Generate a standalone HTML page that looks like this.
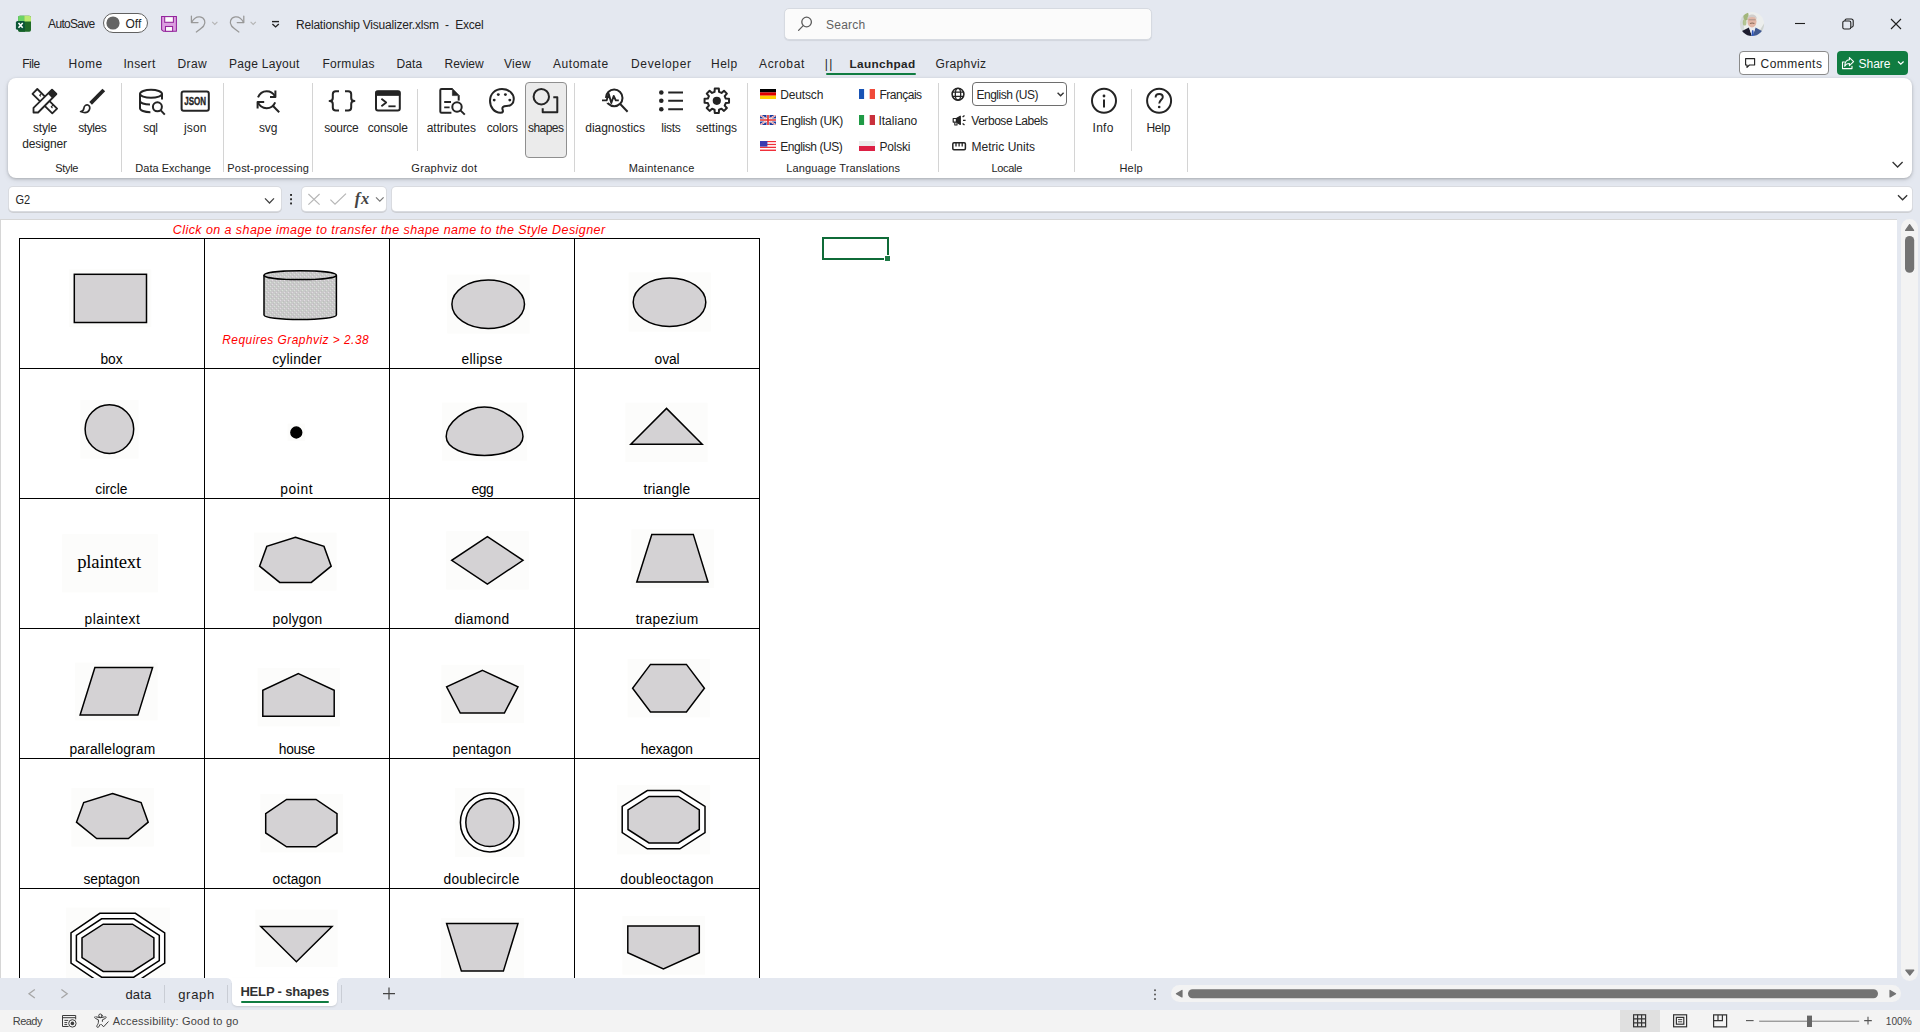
<!DOCTYPE html>
<html><head><meta charset="utf-8"><title>Relationship Visualizer.xlsm - Excel</title><style>
html,body{margin:0;padding:0}
body{width:1920px;height:1032px;overflow:hidden;background:#e4e8f0;position:relative;font-family:"Liberation Sans",sans-serif}
.t{position:absolute;white-space:pre;line-height:1;font-family:"Liberation Sans",sans-serif}
.a{position:absolute;box-sizing:border-box}
.vs{position:absolute;width:1px;background:#d4d4d4}
.gl{position:absolute;background:#000}
svg{position:absolute;left:0;top:0;overflow:visible}
text{white-space:pre}
</style></head>
<body>
<div class="a" style="left:784px;top:8px;width:368px;height:32px;background:#fbfbfb;border:1px solid #d6dae1;border-radius:5px;box-shadow:0 1px 1px rgba(0,0,0,.08)"></div>
<div class="a" style="left:825.5px;top:73px;width:90px;height:2px;background:#107c41;border-radius:1px"></div>
<div class="a" style="left:1739px;top:51px;width:90px;height:24px;background:#fff;border:1px solid #8a8a8a;border-radius:4px"></div>
<div class="a" style="left:1837px;top:51px;width:71px;height:24px;background:#107c41;border-radius:4px"></div>
<div class="a" style="left:8px;top:78px;width:1904px;height:100px;background:#fff;border-radius:8px;box-shadow:0 1px 3px rgba(0,0,0,.22),0 2px 6px rgba(0,0,0,.08)"></div>
<div class="vs" style="left:121px;top:83px;height:89px"></div>
<div class="vs" style="left:223px;top:83px;height:89px"></div>
<div class="vs" style="left:312px;top:83px;height:89px"></div>
<div class="vs" style="left:574px;top:83px;height:89px"></div>
<div class="vs" style="left:747px;top:83px;height:89px"></div>
<div class="vs" style="left:938px;top:83px;height:89px"></div>
<div class="vs" style="left:1074px;top:83px;height:89px"></div>
<div class="vs" style="left:1187px;top:83px;height:89px"></div>
<div class="vs" style="left:417px;top:89px;height:62px"></div>
<div class="vs" style="left:1131px;top:89px;height:62px"></div>
<div class="a" style="left:525px;top:82px;width:42px;height:76px;background:#ebebeb;border:1px solid #8f8f8f;border-radius:4px"></div>
<div class="a" style="left:972px;top:82px;width:95px;height:24px;background:#fff;border:1px solid #6e6e6e;border-radius:4px"></div>
<div class="a" style="left:8.5px;top:187px;width:272px;height:24px;background:#fff;border-radius:4px;box-shadow:0 0 0 1px #d9dbe0,0 1px 0 1px #cdcfd3"></div>
<div class="a" style="left:302px;top:187px;width:84px;height:24px;background:#fff;border-radius:4px;box-shadow:0 0 0 1px #d9dbe0,0 1px 0 1px #cdcfd3"></div>
<div class="a" style="left:392px;top:187px;width:1520px;height:24px;background:#fff;border-radius:4px;box-shadow:0 0 0 1px #d9dbe0,0 1px 0 1px #cdcfd3"></div>
<div class="a" style="left:0px;top:219px;width:1897px;height:759px;background:#fff;border-left:1px solid #d6d6d6;border-top:1px solid #d6d6d6"></div>
<div class="gl" style="left:19px;top:238px;width:1px;height:740px"></div>
<div class="gl" style="left:204px;top:238px;width:1px;height:740px"></div>
<div class="gl" style="left:389px;top:238px;width:1px;height:740px"></div>
<div class="gl" style="left:574px;top:238px;width:1px;height:740px"></div>
<div class="gl" style="left:759px;top:238px;width:1px;height:740px"></div>
<div class="gl" style="left:19px;top:238px;width:741px;height:1px"></div>
<div class="gl" style="left:19px;top:368px;width:741px;height:1px"></div>
<div class="gl" style="left:19px;top:498px;width:741px;height:1px"></div>
<div class="gl" style="left:19px;top:628px;width:741px;height:1px"></div>
<div class="gl" style="left:19px;top:758px;width:741px;height:1px"></div>
<div class="gl" style="left:19px;top:888px;width:741px;height:1px"></div>
<div class="a" style="left:822px;top:237px;width:67px;height:23px;border:2px solid #0f6b38"></div>
<div class="a" style="left:884px;top:255px;width:7px;height:7px;background:#1f7a47;border:1px solid #fff"></div>
<div class="a" style="left:0;top:1010px;width:1920px;height:22px;background:#f3f3f3"></div>
<div class="a" style="left:232px;top:978px;width:105px;height:28px;background:#fff;border-radius:0 0 5px 5px;box-shadow:0 1px 2px rgba(0,0,0,.12)"></div>
<div class="a" style="left:240.6px;top:1001px;width:88.7px;height:2px;background:#107c41;border-radius:1px"></div>
<div class="a" style="left:227px;top:978px;width:5px;height:5px;background:radial-gradient(circle at 0% 100%,#e4e8f0 4.4px,#fff 5.2px)"></div>
<div class="a" style="left:337px;top:978px;width:5px;height:5px;background:radial-gradient(circle at 100% 100%,#e4e8f0 4.4px,#fff 5.2px)"></div>
<div class="vs" style="left:164px;top:985px;height:18px;background:#c9cdd5"></div>
<div class="vs" style="left:227px;top:985px;height:18px;background:#c9cdd5"></div>
<div class="vs" style="left:341px;top:985px;height:18px;background:#c9cdd5"></div>
<svg width="1920" height="1032" viewBox="0 0 1920 1032">
<defs><pattern id="dith" width="4" height="4" patternUnits="userSpaceOnUse"><rect width="4" height="4" fill="#c9c9c9"/><rect x="0" y="0" width="1" height="1" fill="#e3d9e3"/><rect x="2" y="2" width="1" height="1" fill="#d9e3d9"/><rect x="3" y="1" width="1" height="1" fill="#bdbdbd"/><rect x="1" y="3" width="1" height="1" fill="#bfbfbf"/></pattern></defs>
<clipPath id="sheetclip"><rect x="2" y="220" width="1895" height="758"/></clipPath>
<g clip-path="url(#sheetclip)">
<g stroke="#000" stroke-width="1.5" stroke-linejoin="miter" fill="#d4d2d4">
<rect x="69.0" y="269.4" width="82.3" height="57.8" fill="#fcfcfb" stroke="none"/>
<rect x="74.3" y="274.3" width="72.2" height="48.2"/>
<path d="M264 275.2 V315 C264 317.6 280.2 319.6 300.2 319.6 C320.2 319.6 336.4 317.6 336.4 315 V275.2 C336.4 272.6 320.2 270.8 300.2 270.8 C280.2 270.8 264 272.6 264 275.2Z" fill="url(#dith)"/><path d="M264 275.2 C264 277.8 280.2 279.6 300.2 279.6 C320.2 279.6 336.4 277.8 336.4 275.2" fill="none"/>
<rect x="447.2" y="274.6" width="82.5" height="59.0" fill="#fcfcfb" stroke="none"/>
<ellipse cx="488.2" cy="304.2" rx="36.3" ry="24.3"/>
<rect x="628.6" y="272.4" width="82.2" height="59.2" fill="#fcfcfb" stroke="none"/>
<ellipse cx="669.5" cy="302.3" rx="36.3" ry="24.3"/>
<rect x="80.3" y="400.0" width="58.2" height="58.6" fill="#fcfcfb" stroke="none"/>
<circle cx="109.4" cy="429.1" r="24.3"/>
<rect x="287.6" y="423.6" width="17.4" height="17.4" fill="#fcfcfb" stroke="none"/>
<circle cx="296.3" cy="432.5" r="5.4" fill="#000"/>
<rect x="442.0" y="402.6" width="85.2" height="58.0" fill="#fcfcfb" stroke="none"/>
<path d="M484.4 407 C503 407 523 423 523 436.6 C523 448.6 503.6 455.4 484.4 455.4 C465.2 455.4 446.2 448.6 446.2 436.6 C446.2 423 465.8 407 484.4 407Z"/>
<rect x="625.3" y="402.7" width="82.4" height="59.3" fill="#fcfcfb" stroke="none"/>
<polygon points="666.5,408.4 702.2,444.3 630.8,444.3" fill="#d4d2d4"/>
<rect x="62.2" y="534.2" width="95.6" height="58.2" fill="#fcfcfb" stroke="none"/>
<rect x="254.0" y="532.6" width="82.6" height="58.0" fill="#fcfcfb" stroke="none"/>
<polygon points="295.4,537.3 324.0,546.4 331.2,566.2 311.3,582.4 279.7,582.4 259.6,566.2 266.8,546.4" fill="#d4d2d4"/>
<rect x="446.2" y="531.2" width="82.6" height="58.4" fill="#fcfcfb" stroke="none"/>
<polygon points="487.4,536.6 523.0,560.3 487.4,584.0 451.7,560.3" fill="#d4d2d4"/>
<rect x="631.4" y="529.4" width="82.6" height="58.4" fill="#fcfcfb" stroke="none"/>
<polygon points="651.8,534.4 693.3,534.4 708.0,582.0 636.8,582.0" fill="#d4d2d4"/>
<rect x="75.2" y="662.6" width="82.4" height="57.8" fill="#fcfcfb" stroke="none"/>
<polygon points="94.9,667.5 152.6,667.5 137.9,715.1 80.1,715.1" fill="#d4d2d4"/>
<rect x="257.6" y="668.0" width="82.4" height="58.4" fill="#fcfcfb" stroke="none"/>
<polygon points="298.4,673.6 334.2,690.2 334.2,716.2 262.8,716.2 262.8,690.2" fill="#d4d2d4"/>
<rect x="441.4" y="664.8" width="82.6" height="58.4" fill="#fcfcfb" stroke="none"/>
<polygon points="482.5,670.4 518.0,686.8 504.4,713.0 460.3,713.0 446.6,686.8" fill="#d4d2d4"/>
<rect x="627.6" y="659.0" width="82.4" height="58.4" fill="#fcfcfb" stroke="none"/>
<polygon points="650.5,664.4 686.4,664.4 704.4,688.3 686.4,712.0 650.5,712.0 632.6,688.3" fill="#d4d2d4"/>
<rect x="71.4" y="788.0" width="82.4" height="58.6" fill="#fcfcfb" stroke="none"/>
<polygon points="112.5,793.5 141.1,802.5 148.2,822.2 128.4,838.5 96.7,838.5 76.5,822.2 83.7,802.5" fill="#d4d2d4"/>
<rect x="260.4" y="794.0" width="82.6" height="58.4" fill="#fcfcfb" stroke="none"/>
<polygon points="286.6,799.4 316.0,799.4 337.0,813.6 337.0,833.0 316.0,846.8 286.6,846.8 265.7,833.0 265.7,813.6" fill="#d4d2d4"/>
<rect x="455.2" y="788.0" width="69.2" height="69.0" fill="#fcfcfb" stroke="none"/>
<circle cx="489.8" cy="822.5" r="29.4" fill="#fff"/><circle cx="489.8" cy="822.5" r="24" />
<rect x="617.0" y="785.2" width="93.2" height="69.2" fill="#fcfcfb" stroke="none"/>
<polygon points="647.3,790.6 679.9,790.6 705.0,806.4 705.0,832.6 679.9,848.8 647.3,848.8 622.2,832.6 622.2,806.4" fill="#fff"/>
<polygon points="649.0,796.4 678.3,796.4 699.3,809.8 699.3,829.5 678.3,843.0 649.0,843.0 628.0,829.5 628.0,809.8" fill="#d4d2d4"/>
<rect x="66.0" y="907.6" width="104.0" height="82.4" fill="#fcfcfb" stroke="none"/>
<polygon points="99.8,913.3 135.4,913.3 164.7,932.8 164.7,963.0 135.4,982.6 99.8,982.6 71.0,963.0 71.0,932.8" fill="#fff"/>
<polygon points="101.6,918.8 133.7,918.8 159.3,935.4 159.3,960.6 133.7,977.2 101.6,977.2 76.4,960.6 76.4,935.4" fill="#fff"/>
<polygon points="103.2,924.2 132.5,924.2 153.9,937.9 153.9,957.6 132.5,971.4 103.2,971.4 82.0,957.6 82.0,937.9" fill="#d4d2d4"/>
<rect x="255.3" y="909.6" width="82.4" height="57.4" fill="#fcfcfb" stroke="none"/>
<polygon points="260.8,926.6 332.0,926.6 296.4,961.8" fill="#d4d2d4"/>
<rect x="441.2" y="918.0" width="82.8" height="62.0" fill="#fcfcfb" stroke="none"/>
<polygon points="446.6,923.4 518.0,923.4 503.4,971.1 461.4,971.1" fill="#d4d2d4"/>
<rect x="622.4" y="916.0" width="82.6" height="58.6" fill="#fcfcfb" stroke="none"/>
<polygon points="627.8,925.9 699.3,925.9 699.3,952.8 663.4,969.0 627.8,952.8" fill="#d4d2d4"/>
</g>
</g>
<g>
<rect x="18.1" y="15.8" width="12.9" height="16" rx="1.7" fill="#1f6b27"/>
<path d="M18.1 17.5 a1.7 1.7 0 0 1 1.7-1.7 H24.2 V21.4 H18.1Z" fill="#6bd366"/>
<path d="M24.2 15.8 H29.3 a1.7 1.7 0 0 1 1.7 1.7 V21.4 H24.2Z" fill="#bcea72"/>
<path d="M18.1 27 H25 V31.8 H19.8 a1.7 1.7 0 0 1 -1.7-1.7Z" fill="#14602a"/>
<rect x="15.9" y="20.9" width="9" height="8.9" rx="1.6" fill="#0b5637"/>
<path d="M18.5 23.1 L22.7 27.8 M22.7 23.1 L18.5 27.8" stroke="#fff" stroke-width="1.55" fill="none"/>
</g>
<rect x="103.5" y="13.5" width="44" height="19" rx="9.5" fill="#fff" stroke="#616161" stroke-width="1"/><circle cx="113" cy="23" r="6.6" fill="#646464"/>
<g stroke="#93239b" stroke-width="1.05"><path d="M161.6 16.5 H176.4 V31.3 H163.4 L161.6 29.7Z" fill="#dc9fe0"/>
<rect x="164.7" y="16.6" width="8.7" height="5.7" fill="#fdfdfd"/>
<rect x="165.5" y="26.5" width="7.1" height="4.8" fill="#fdfdfd"/></g>
<g fill="none" stroke="#989898" stroke-width="1.25" stroke-linecap="round" stroke-linejoin="round"><path d="M191.4 16 V22.5 H198" /><path d="M191.7 22.2 C193.7 18.6 197 16.4 200 16.9 C204.7 17.7 206.3 22.6 203.6 26 C202.4 27.6 199 30 196.3 32"/></g>
<g fill="none" stroke="#989898" stroke-width="1.25" stroke-linecap="round" stroke-linejoin="round" transform="translate(435.2,0) scale(-1,1)"><path d="M191.4 16 V22.5 H198" /><path d="M191.7 22.2 C193.7 18.6 197 16.4 200 16.9 C204.7 17.7 206.3 22.6 203.6 26 C202.4 27.6 199 30 196.3 32"/></g>
<g fill="none" stroke="#b4b4b4" stroke-width="1.1"><polyline points="212.2,21.8 214.8,24.4 217.4,21.8"/><polyline points="250.6,21.8 253.2,24.4 255.8,21.8"/></g>
<g fill="none" stroke="#222" stroke-width="1.4"><path d="M272 21.6 H279"/><polyline points="272.4,24 275.6,26.9 278.8,24"/></g>
<g fill="none" stroke="#5c5c5c" stroke-width="1.3" stroke-linecap="round"><circle cx="806.6" cy="22" r="4.8"/><path d="M803.2 25.6 L798.6 30.4"/></g>
<g><clipPath id="av"><circle cx="1752" cy="24" r="12.1"/></clipPath><filter id="avb" x="-20%" y="-20%" width="140%" height="140%"><feGaussianBlur stdDeviation="0.7"/></filter>
<g clip-path="url(#av)"><g filter="url(#avb)">
<rect x="1736" y="8" width="32" height="32" fill="#eceeed"/>
<rect x="1739" y="10" width="5" height="22" fill="#d5dadb"/>
<ellipse cx="1746" cy="16" rx="2.6" ry="4.4" fill="#8aa354" opacity="0.75"/>
<ellipse cx="1744.6" cy="22.4" rx="1.8" ry="3.2" fill="#9db36c" opacity="0.7"/>
<path d="M1760 30 L1765 22 V34Z" fill="#cfd3cf"/>
<path d="M1741 31.5 L1749 27.6 L1752.4 37 H1738Z" fill="#1b1d2e"/>
<path d="M1763 31.5 L1755.4 27.6 L1752.4 37 H1766Z" fill="#41598f"/>
<path d="M1749 27.4 L1752.2 37 L1755.6 27.4Z" fill="#ebebef"/>
<path d="M1752 30.2 L1751.4 37 H1754.2 L1753.4 30.2Z" fill="#2f56b8"/>
<ellipse cx="1752" cy="21.6" rx="4.5" ry="6" fill="#e2b7a6"/>
<path d="M1747.4 19.4 C1746.8 13 1757.4 13 1756.8 19.4 C1755.4 16.2 1748.8 16.2 1747.4 19.4Z" fill="#d0cdcb"/>
<path d="M1748.6 19.8 H1755.6" stroke="#a58f88" stroke-width="0.9"/>
<path d="M1750 23.5 Q1752.2 22.6 1754.4 23.5" stroke="#8b6b5a" stroke-width="1.1" fill="none"/>
</g></g></g>
<g fill="none" stroke="#1f1f1f" stroke-width="1.1"><path d="M1795 23.5 H1805"/><rect x="1842.8" y="21" width="8" height="8" rx="1.6"/><path d="M1845 21 V20.6 a1.6 1.6 0 0 1 1.6 -1.6 H1851.4 a1.8 1.8 0 0 1 1.8 1.8 V25.6 a1.6 1.6 0 0 1 -1.6 1.6 H1850.8"/><path d="M1891 19 L1901 29 M1901 19 L1891 29"/></g>
<path d="M1745.6 58.6 H1754.6 V65 H1749.4 L1747 67.4 V65 H1745.6Z" fill="none" stroke="#242424" stroke-width="1.15" stroke-linejoin="round"/>
<g fill="none" stroke="#fff" stroke-width="1.1" stroke-linejoin="round" stroke-linecap="round"><path d="M1844.4 62 H1842.5 V68.6 H1852 V66.2"/><path d="M1849.4 57.6 L1853.6 61.6 L1849.4 65.6 V63.5 C1847 63.5 1845.6 64.5 1844.7 66.2 C1844.8 62.6 1846.6 60 1849.4 59.8Z"/></g>
<polyline points="1898,61.6 1900.8,64.2 1903.6,61.6" fill="none" stroke="#fff" stroke-width="1.3"/>
<g fill="none" stroke="#242424" stroke-width="2" stroke-linejoin="round" stroke-linecap="butt">
<g stroke-width="1.8">
<polygon points="37.3,89 57.1,108.6 52.3,113.4 32.5,93.8" fill="#fff"/>
<path d="M41.6 93.3 l-1.9 1.9 l1.2 1.2 M53.2 104.9 l-1.9 1.9 l1.2 1.2" stroke-width="1.1" stroke-linejoin="miter"/>
<polygon points="33.5,107.9 33.5,112.5 38.1,112.5 56.4,94 52,89.6" fill="#fff"/>
<polygon points="52.4,90.2 55.8,93.6 52.3,97.2 48.9,93.8" fill="#242424" stroke-width="1.6" />
</g>
<path d="M103.8 90 L90.6 103.4" stroke-width="3.8"/>
<path d="M80.6 111.5 C82.8 111.4 83.7 109.9 83.9 108.1 C84.2 105.5 86.4 104.5 87.9 105 C89.9 105.7 90.2 108 89.3 109.8 C88 112.4 84.6 113.2 80.6 111.5Z" stroke-width="1.7"/>
<ellipse cx="151" cy="93.8" rx="11" ry="4"/><path d="M140 93.8 V108.2 C140 110.4 144.4 112.2 150.4 112.2"/><path d="M162 93.8 V99.4"/><path d="M140 100.8 C140 103 144.4 104.6 150 104.6"/>
<circle cx="157.4" cy="106.8" r="4.5"/><path d="M160.8 110.4 L164.8 114.6"/>
<rect x="181.6" y="91.4" width="27.2" height="19.4" rx="2"/>
<path d="M258 97.4 C259.6 93.4 262.8 91.2 266.6 91.2 C270.2 91.2 273.4 93.2 275 96.4"/><path d="M275.4 90.4 V97 H270"/>
<path d="M257.8 102.2 C259.4 106 262.8 108.2 266.6 108.2 C270.4 108.2 273.6 106 275.2 102.4"/><path d="M264.2 102 H257.6 V108.6"/><path d="M272.8 105.8 L279.2 112.2"/>
<path d="M339 91.3 H335.8 Q332.8 91.3 332.8 94.3 V98 Q332.8 101 329.6 101 Q332.8 101 332.8 104 V107.6 Q332.8 110.6 335.8 110.6 H339"/>
<path d="M345 91.3 H348.2 Q351.2 91.3 351.2 94.3 V98 Q351.2 101 354.4 101 Q351.2 101 351.2 104 V107.6 Q351.2 110.6 348.2 110.6 H345"/>
<rect x="376" y="91.3" width="23.8" height="19.3" rx="2"/><rect x="376" y="91.3" width="23.8" height="4" fill="#242424" stroke-width="1"/>
<polyline points="381.4,98.8 386.2,102.5 381.4,106.2" stroke-width="1.8"/><path d="M388.4 106.3 H395.6" stroke-width="1.8"/>
<path d="M452.4 89 H441.6 Q440.3 89 440.3 90.3 V111.4 Q440.3 112.7 441.6 112.7 H451.4"/><path d="M458.7 95.6 V100.6"/><path d="M452.4 88.4 V95.6 H459.4Z" fill="#242424" stroke-width="0.6"/>
<path d="M444.2 102 H451 M444.2 107.4 H449.6" stroke-width="1.8"/><circle cx="457" cy="107" r="4.7"/><path d="M460.4 110.4 L464.8 114.6"/>
<path d="M502 89 C509 89 513.8 93.4 513.8 99 C513.8 104 510 106 506.4 106 C503.2 106 501.8 107.6 502.6 109.6 C503.2 111.2 503.4 112.7 500.4 112.7 C494.4 112.7 490 107.4 490 100.8 C490 94 495 89 502 89Z"/>
<g fill="#242424" stroke="none"><circle cx="498.3" cy="94.6" r="1.45"/><circle cx="505.4" cy="94.6" r="1.45"/><circle cx="494.2" cy="100.1" r="1.45"/><circle cx="509.8" cy="100.1" r="1.45"/></g>
<circle cx="541.3" cy="96.7" r="7.7"/><polyline points="553.3,97.3 557.3,97.3 557.3,112.3 542.7,112.3 542.7,108.3"/>
<circle cx="614.2" cy="97.9" r="8.3"/><path d="M620.2 104 L627.6 111.8"/><path d="M603 100.4 H608.4" stroke="#fff" stroke-width="5"/>
<polyline points="602,100.4 606.6,100.4 608.7,93.8 611.3,103 613.7,96 615.8,100.4 618.8,100.4" stroke-width="1.9"/>
<path d="M668.2 92.5 H683 M668.2 100.8 H683 M668.2 109.2 H683"/><g fill="#242424" stroke="none"><circle cx="661.3" cy="92.5" r="2.3"/><circle cx="661.3" cy="100.8" r="2.3"/><circle cx="661.3" cy="109.2" r="2.3"/></g>
<polygon points="714.58,91.87 714.76,88.57 718.84,88.57 719.02,91.87 721.55,92.92 724.01,90.71 726.89,93.59 724.68,96.05 725.73,98.58 729.03,98.76 729.03,102.84 725.73,103.02 724.68,105.55 726.89,108.01 724.01,110.89 721.55,108.68 719.02,109.73 718.84,113.03 714.76,113.03 714.58,109.73 712.05,108.68 709.59,110.89 706.71,108.01 708.92,105.55 707.87,103.02 704.57,102.84 704.57,98.76 707.87,98.58 708.92,96.05 706.71,93.59 709.59,90.71 712.05,92.92"/><circle cx="716.8" cy="100.8" r="4.1" fill="#242424" stroke="none"/>
<circle cx="1104" cy="100.8" r="12"/><path d="M1104 99.4 V107.4"/><circle cx="1104" cy="96" r="1.4" fill="#242424" stroke="none"/>
<circle cx="1159.1" cy="100.8" r="12"/><path d="M1155.6 97.4 C1155.6 95 1157.2 94 1159.2 94 C1161.4 94 1162.8 95.2 1162.8 97 C1162.8 99.6 1159.2 100 1159.2 103.6" stroke-width="1.9"/><circle cx="1159.2" cy="107" r="1.3" fill="#242424" stroke="none"/>
</g>
<text x="184.2" y="104.8" font-family="Liberation Sans" font-weight="700" font-size="10.6" textLength="21.8" lengthAdjust="spacingAndGlyphs" fill="#242424" stroke="#242424" stroke-width="0.35">JSON</text>
<rect x="760" y="89" width="16" height="3.4" fill="#000"/><rect x="760" y="92.4" width="16" height="3.3" fill="#e00000"/><rect x="760" y="95.7" width="16" height="3.3" fill="#ffce00"/><g><clipPath id="uk"><rect x="760" y="115" width="16" height="10"/></clipPath><g clip-path="url(#uk)"><rect x="760" y="115" width="16" height="10" fill="#1e3a9a"/><path d="M760 115 L776 125 M776 115 L760 125" stroke="#fff" stroke-width="1.7"/><path d="M760 115 L776 125 M776 115 L760 125" stroke="#e0302f" stroke-width="0.6"/><path d="M768 115 V125 M760 120 H776" stroke="#fff" stroke-width="3"/><path d="M768 115 V125 M760 120 H776" stroke="#e0302f" stroke-width="1.7"/></g></g><rect x="760" y="141.00" width="16" height="1.43" fill="#f0303a"/><rect x="760" y="142.43" width="16" height="1.43" fill="#fff"/><rect x="760" y="143.86" width="16" height="1.43" fill="#f0303a"/><rect x="760" y="145.29" width="16" height="1.43" fill="#fff"/><rect x="760" y="146.71" width="16" height="1.43" fill="#f0303a"/><rect x="760" y="148.14" width="16" height="1.43" fill="#fff"/><rect x="760" y="149.57" width="16" height="1.43" fill="#f0303a"/><rect x="760" y="141" width="7.4" height="5.6" fill="#3a3ab0"/><rect x="859" y="89" width="5.3" height="10" fill="#1853b5"/><rect x="864.3" y="89" width="5.4" height="10" fill="#fff"/><rect x="869.7" y="89" width="5.3" height="10" fill="#f04a3a"/><rect x="859" y="115" width="5.3" height="10" fill="#1f9a45"/><rect x="864.3" y="115" width="5.4" height="10" fill="#fff"/><rect x="869.7" y="115" width="5.3" height="10" fill="#c9303c"/><rect x="859" y="141" width="16" height="5" fill="#ececec"/><rect x="859" y="146" width="16" height="5" fill="#dc2044"/>
<g fill="none" stroke="#242424" stroke-width="1.55"><circle cx="958" cy="94.2" r="5.9"/><ellipse cx="958" cy="94.2" rx="2.7" ry="5.9" stroke-width="1.3"/><path d="M952.4 92.1 H963.6 M952.4 96.3 H963.6" stroke-width="1.3"/></g>
<g fill="none" stroke="#242424" stroke-width="1.2" stroke-linejoin="round"><path d="M956.4 118.5 H953.2 V122.1 H956.4"/><path d="M956.4 118.5 L960.3 116.2 V124.4 L956.4 122.1Z" fill="#242424"/><path d="M954.8 122.4 V125 H957 V122.8" stroke-width="1.1"/><path d="M962.6 117 L964.5 115.5 M963 120.3 H965.6 M962.6 123.6 L964.5 125.1" stroke-width="1.3"/></g>
<g fill="none" stroke="#242424" stroke-width="1.5"><rect x="952.8" y="142.8" width="12.6" height="7" rx="1.2"/><path d="M956 142.8 V146.4 M959.1 142.8 V146.4 M962.2 142.8 V146.4" stroke-width="1.3"/></g>
<polyline points="1057.6,92.8 1060.6,95.8 1063.6,92.8" fill="none" stroke="#333" stroke-width="1.4"/>
<polyline points="1892.6,162 1897.6,167 1902.6,162" fill="none" stroke="#333" stroke-width="1.3"/>
<polyline points="265,198.4 269.5,203 274,198.4" fill="none" stroke="#444" stroke-width="1.3"/>
<g fill="#2a2a2a"><rect x="290.1" y="194" width="1.9" height="1.9"/><rect x="290.1" y="198.3" width="1.9" height="1.9"/><rect x="290.1" y="202.5" width="1.9" height="1.9"/></g>
<g fill="none" stroke="#b7b7b7" stroke-width="1.2"><path d="M308.4 194 L319.6 204.6 M319.6 194 L308.4 204.6"/><polyline points="330.4,199.6 335,204.2 346,193.6"/></g>
<polyline points="376,197.4 379.8,201.2 383.6,197.4" fill="none" stroke="#777" stroke-width="1.2"/>
<polyline points="1898,195.2 1902.6,199.8 1907.2,195.2" fill="none" stroke="#333" stroke-width="1.3"/>
<g fill="none" stroke="#a6a6a6" stroke-width="1.3"><polyline points="34.8,989.4 29,993.7 34.8,998"/><polyline points="61.4,989.4 67.2,993.7 61.4,998"/></g>
<path d="M383 993.6 H395 M389 987.6 V999.6" stroke="#444" stroke-width="1.2" fill="none"/>
<g fill="#555"><circle cx="1155" cy="990.2" r="1"/><circle cx="1155" cy="994.6" r="1"/><circle cx="1155" cy="999" r="1"/></g>
<rect x="1171" y="985" width="730" height="17" rx="8.5" fill="#f3f3f3"/><rect x="1188" y="989.2" width="690" height="9.1" rx="4.5" fill="#737373"/>
<g fill="#737373" stroke="#737373" stroke-width="1.2" stroke-linejoin="round"><polygon points="1176.4,993.7 1182,990.4 1182,997"/><polygon points="1895.6,993.7 1890,990.4 1890,997"/></g>
<rect x="1901" y="219" width="17" height="762" rx="8.5" fill="#f3f3f3"/><rect x="1905" y="236" width="9.2" height="36.8" rx="4.6" fill="#737373"/>
<g fill="#737373" stroke="#737373" stroke-width="1.2" stroke-linejoin="round"><polygon points="1909.6,224.6 1913.6,230.4 1905.6,230.4"/><polygon points="1909.8,975.2 1913.8,970.2 1905.8,970.2"/></g>
<g fill="none" stroke="#3c3c3c" stroke-width="1"><path d="M68.6 1026.5 H62.5 V1015.5 H75.7 V1019.4"/><path d="M62.5 1017.7 H75.7"/><path d="M64.4 1020.4 H68.2 M64.4 1022.6 H67.2 M64.4 1024.6 H67.2"/><circle cx="72.4" cy="1023.4" r="3.7"/><circle cx="72.4" cy="1023.4" r="1.8" fill="#3c3c3c" stroke="none"/></g>
<g fill="none" stroke="#3c3c3c" stroke-width="1" stroke-linecap="round" stroke-linejoin="round"><circle cx="100.4" cy="1015.7" r="1.7"/><path d="M95 1016.6 C94.4 1017.2 94.6 1018 95.4 1018.4 L98.4 1019.8 V1022.4 C98.4 1024 96.6 1025.4 96.8 1026.6 C97 1027.6 98.2 1027.6 98.8 1026.8 L100.2 1024.4"/><path d="M105.8 1016.6 C106.4 1017.2 106.2 1018 105.4 1018.4 L102.4 1019.8 V1021.4"/><path d="M96.4 1017 Q100.4 1018.6 104.4 1017"/><polyline points="101.6,1024.6 103.6,1026.8 108.2,1021.8"/></g>
<rect x="1620" y="1010" width="40" height="22" fill="#e0e0e0"/>
<g fill="none" stroke="#333" stroke-width="1.2"><rect x="1633.6" y="1014.8" width="12" height="12"/><path d="M1637.6 1014.8 V1026.8 M1641.6 1014.8 V1026.8 M1633.6 1018.8 H1645.6 M1633.6 1022.8 H1645.6"/><rect x="1673.6" y="1014.8" width="13" height="12"/><rect x="1676.4" y="1017.4" width="7.4" height="6.8"/><path d="M1678 1019.6 H1682.2 M1678 1021.8 H1682.2" stroke-width="0.9"/><path d="M1713.6 1014.8 H1726.6 V1026.8 H1713.6Z M1718 1014.8 V1020.6 M1713.6 1020.6 H1722.4 V1014.8"/></g>
<g fill="none" stroke="#555" stroke-width="1.1"><path d="M1746 1020.6 H1753.6"/><path d="M1759.2 1021.2 H1859.2" stroke="#777" stroke-width="1"/><path d="M1864.2 1020.6 H1871.8 M1868 1016.8 V1024.4"/></g><rect x="1807" y="1015.6" width="5" height="11.4" fill="#666"/>
<g font-family="Liberation Sans, sans-serif" style="white-space:pre" xml:space="preserve">
<text x="48.10" y="28.20" font-size="12" letter-spacing="-0.695" fill="#242424">AutoSave</text>
<text x="125.60" y="28.00" font-size="12" letter-spacing="-0.076" fill="#242424">Off</text>
<text x="296.00" y="29.00" font-size="12" letter-spacing="-0.203" fill="#242424">Relationship Visualizer.xlsm  -  Excel</text>
<text x="826.00" y="29.00" font-size="12" letter-spacing="0.230" fill="#616161">Search</text>
<text x="22.25" y="68.00" font-size="12" letter-spacing="-0.471" fill="#242424">File</text>
<text x="68.50" y="68.00" font-size="12" letter-spacing="0.555" fill="#242424">Home</text>
<text x="123.40" y="68.00" font-size="12" letter-spacing="0.384" fill="#242424">Insert</text>
<text x="177.50" y="68.00" font-size="12" letter-spacing="0.388" fill="#242424">Draw</text>
<text x="229.00" y="68.00" font-size="12" letter-spacing="0.295" fill="#242424">Page Layout</text>
<text x="322.50" y="68.00" font-size="12" letter-spacing="0.284" fill="#242424">Formulas</text>
<text x="396.50" y="68.00" font-size="12" letter-spacing="0.109" fill="#242424">Data</text>
<text x="444.50" y="68.00" font-size="12" letter-spacing="-0.036" fill="#242424">Review</text>
<text x="504.00" y="68.00" font-size="12" letter-spacing="0.291" fill="#242424">View</text>
<text x="553.00" y="68.00" font-size="12" letter-spacing="0.544" fill="#242424">Automate</text>
<text x="631.00" y="68.00" font-size="12" letter-spacing="0.662" fill="#242424">Developer</text>
<text x="711.00" y="68.00" font-size="12" letter-spacing="0.498" fill="#242424">Help</text>
<text x="759.00" y="68.00" font-size="12" letter-spacing="0.663" fill="#242424">Acrobat</text>
<text x="824.80" y="68.00" font-size="12" letter-spacing="1.383" fill="#242424">||</text>
<text x="935.50" y="68.00" font-size="12" letter-spacing="0.355" fill="#242424">Graphviz</text>
<text x="849.50" y="68.00" font-size="11.8" letter-spacing="0.348" fill="#242424" font-weight="700">Launchpad</text>
<text x="1760.60" y="68.00" font-size="12" letter-spacing="0.469" fill="#242424">Comments</text>
<text x="1858.50" y="68.00" font-size="12" letter-spacing="-0.024" fill="#ffffff">Share</text>
<text x="33.00" y="131.80" font-size="12" letter-spacing="-0.175" fill="#242424">style</text>
<text x="78.30" y="131.80" font-size="12" letter-spacing="-0.455" fill="#242424">styles</text>
<text x="143.30" y="131.80" font-size="12" letter-spacing="-0.337" fill="#242424">sql</text>
<text x="184.00" y="131.80" font-size="12" letter-spacing="0.120" fill="#242424">json</text>
<text x="259.00" y="131.80" font-size="12" letter-spacing="-0.150" fill="#242424">svg</text>
<text x="324.30" y="131.80" font-size="12" letter-spacing="-0.329" fill="#242424">source</text>
<text x="367.70" y="131.80" font-size="12" letter-spacing="-0.181" fill="#242424">console</text>
<text x="426.70" y="131.80" font-size="12" letter-spacing="-0.007" fill="#242424">attributes</text>
<text x="486.70" y="131.80" font-size="12" letter-spacing="-0.142" fill="#242424">colors</text>
<text x="528.00" y="131.80" font-size="12" letter-spacing="-0.539" fill="#242424">shapes</text>
<text x="585.30" y="131.80" font-size="12" letter-spacing="-0.034" fill="#242424">diagnostics</text>
<text x="661.30" y="131.80" font-size="12" letter-spacing="-0.317" fill="#242424">lists</text>
<text x="696.00" y="131.80" font-size="12" letter-spacing="-0.051" fill="#242424">settings</text>
<text x="1092.50" y="131.80" font-size="12" letter-spacing="0.303" fill="#242424">Info</text>
<text x="1146.40" y="131.80" font-size="12" letter-spacing="-0.219" fill="#242424">Help</text>
<text x="22.30" y="147.70" font-size="12" letter-spacing="-0.191" fill="#242424">designer</text>
<text x="780.30" y="98.60" font-size="12" letter-spacing="-0.158" fill="#242424">Deutsch</text>
<text x="780.30" y="124.70" font-size="12" letter-spacing="-0.396" fill="#242424">English (UK)</text>
<text x="780.30" y="150.70" font-size="12" letter-spacing="-0.451" fill="#242424">English (US)</text>
<text x="879.40" y="98.60" font-size="12" letter-spacing="-0.473" fill="#242424">Français</text>
<text x="878.40" y="124.70" font-size="12" letter-spacing="0.026" fill="#242424">Italiano</text>
<text x="879.40" y="150.70" font-size="12" letter-spacing="-0.199" fill="#242424">Polski</text>
<text x="976.50" y="99.40" font-size="12" letter-spacing="-0.496" fill="#242424">English (US)</text>
<text x="971.25" y="125.00" font-size="12" letter-spacing="-0.452" fill="#242424">Verbose Labels</text>
<text x="971.60" y="150.70" font-size="12" letter-spacing="0.005" fill="#242424">Metric Units</text>
<text x="55.30" y="171.80" font-size="11" letter-spacing="-0.334" fill="#242424">Style</text>
<text x="135.30" y="171.80" font-size="11" letter-spacing="0.025" fill="#242424">Data Exchange</text>
<text x="227.30" y="171.80" font-size="11" letter-spacing="0.189" fill="#242424">Post-processing</text>
<text x="411.30" y="171.80" font-size="11" letter-spacing="0.308" fill="#242424">Graphviz dot</text>
<text x="628.70" y="171.80" font-size="11" letter-spacing="0.273" fill="#242424">Maintenance</text>
<text x="786.30" y="171.80" font-size="11" letter-spacing="0.122" fill="#242424">Language Translations</text>
<text x="991.50" y="171.80" font-size="11" letter-spacing="-0.309" fill="#242424">Locale</text>
<text x="1119.40" y="171.80" font-size="11" letter-spacing="0.232" fill="#242424">Help</text>
<text x="15.50" y="204.00" font-size="13" textLength="14.70" lengthAdjust="spacingAndGlyphs" fill="#242424">G2</text>
<text x="354.80" y="203.80" font-size="16.5" letter-spacing="0.705" fill="#444" font-weight="700" font-style="italic" font-family="Liberation Serif, serif">fx</text>
<text x="172.80" y="233.70" font-size="12.5" letter-spacing="0.429" fill="#ff0000" font-style="italic">Click on a shape image to transfer the shape name to the Style Designer</text>
<text x="222.30" y="343.50" font-size="11.9" letter-spacing="0.485" fill="#ff0000" font-style="italic">Requires Graphviz &gt; 2.38</text>
<text x="100.40" y="363.70" font-size="13.8" letter-spacing="0.027" fill="#000">box</text>
<text x="272.20" y="363.70" font-size="13.8" letter-spacing="0.265" fill="#000">cylinder</text>
<text x="461.50" y="363.70" font-size="13.8" letter-spacing="0.293" fill="#000">ellipse</text>
<text x="654.60" y="363.70" font-size="13.8" letter-spacing="-0.082" fill="#000">oval</text>
<text x="95.30" y="493.70" font-size="13.8" letter-spacing="-0.024" fill="#000">circle</text>
<text x="280.30" y="493.70" font-size="13.8" letter-spacing="0.579" fill="#000">point</text>
<text x="471.50" y="493.70" font-size="13.8" letter-spacing="-0.423" fill="#000">egg</text>
<text x="643.40" y="493.70" font-size="13.8" letter-spacing="0.232" fill="#000">triangle</text>
<text x="84.50" y="623.70" font-size="13.8" letter-spacing="0.493" fill="#000">plaintext</text>
<text x="272.60" y="623.70" font-size="13.8" letter-spacing="0.224" fill="#000">polygon</text>
<text x="454.50" y="623.70" font-size="13.8" letter-spacing="0.292" fill="#000">diamond</text>
<text x="635.70" y="623.70" font-size="13.8" letter-spacing="0.239" fill="#000">trapezium</text>
<text x="69.50" y="753.70" font-size="13.8" letter-spacing="0.175" fill="#000">parallelogram</text>
<text x="278.80" y="753.70" font-size="13.8" letter-spacing="-0.329" fill="#000">house</text>
<text x="452.60" y="753.70" font-size="13.8" letter-spacing="0.133" fill="#000">pentagon</text>
<text x="640.70" y="753.70" font-size="13.8" letter-spacing="-0.111" fill="#000">hexagon</text>
<text x="83.40" y="883.70" font-size="13.8" letter-spacing="-0.028" fill="#000">septagon</text>
<text x="272.60" y="883.70" font-size="13.8" letter-spacing="-0.104" fill="#000">octagon</text>
<text x="443.50" y="883.70" font-size="13.8" letter-spacing="0.204" fill="#000">doublecircle</text>
<text x="620.30" y="883.70" font-size="13.8" letter-spacing="0.220" fill="#000">doubleoctagon</text>
<text x="77.20" y="567.80" font-size="18.67" letter-spacing="-0.162" fill="#000" font-family="Liberation Serif, serif">plaintext</text>
<text x="125.40" y="998.80" font-size="13" letter-spacing="0.176" fill="#242424">data</text>
<text x="178.20" y="998.80" font-size="13" letter-spacing="0.695" fill="#242424">graph</text>
<text x="240.40" y="995.80" font-size="13" letter-spacing="-0.166" fill="#303030" font-weight="700">HELP - shapes</text>
<text x="12.70" y="1024.70" font-size="11" letter-spacing="-0.499" fill="#444">Ready</text>
<text x="112.70" y="1024.70" font-size="11" letter-spacing="0.220" fill="#444">Accessibility: Good to go</text>
<text x="1885.80" y="1024.70" font-size="11" textLength="25.90" lengthAdjust="spacingAndGlyphs" fill="#444">100%</text>
</g>
</svg>
</body></html>
